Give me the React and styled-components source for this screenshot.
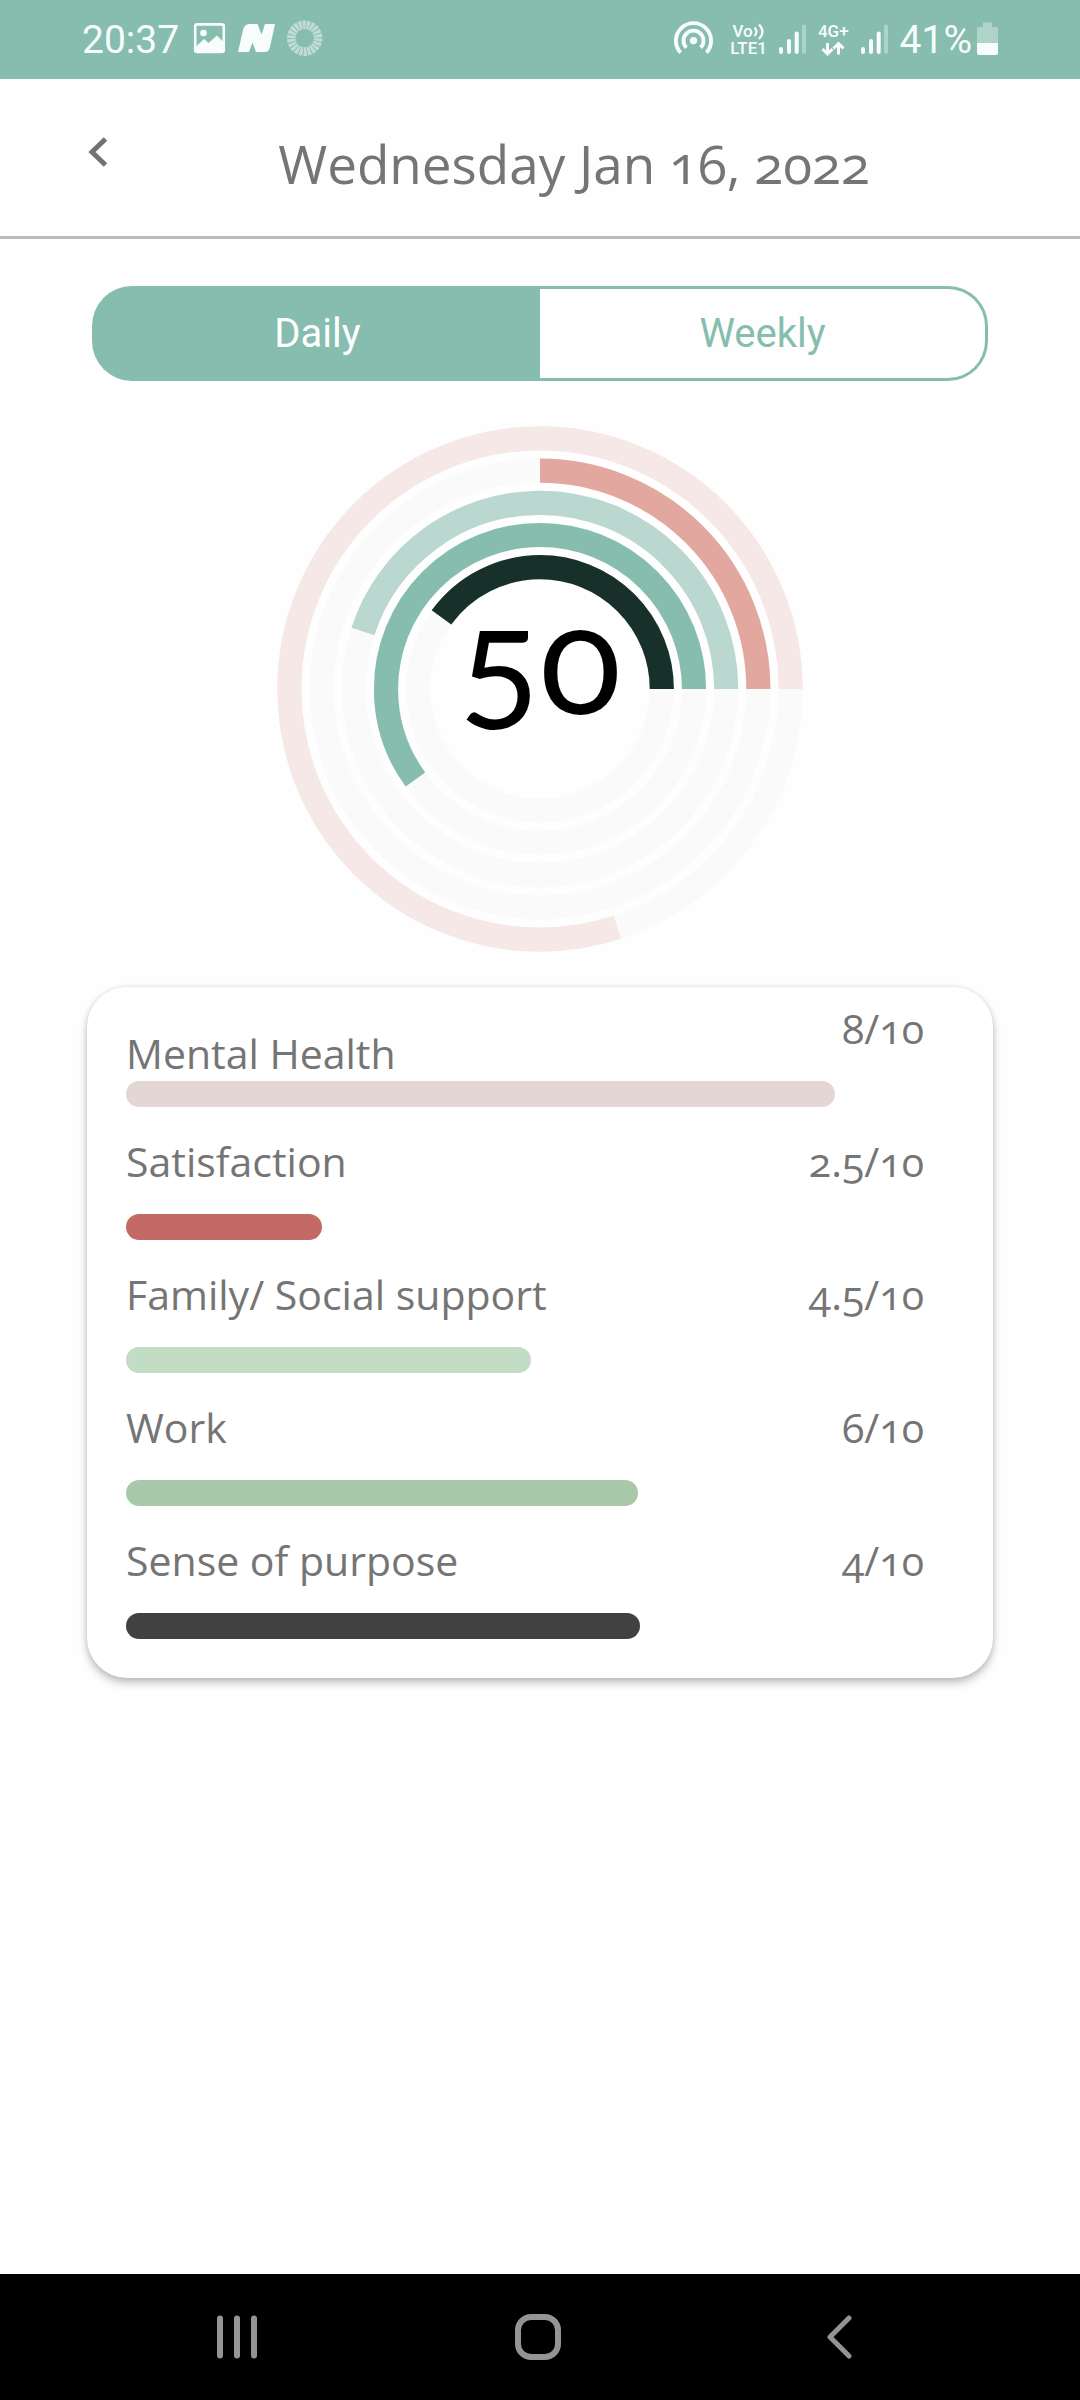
import React, { useState } from 'react';
import styled, { createGlobalStyle } from 'styled-components';

const color = {
  brand: '#86bdae',
  text: '#757575',
  page: '#fefefe',
  rule: '#bcbbbb',
  navIcon: '#949494',
};

const GlobalStyle = createGlobalStyle`
  *, *::before, *::after { box-sizing: border-box; }
  body {
    margin: 0;
    background: ${color.page};
    color: ${color.text};
    font-family: 'Open Sans', 'Noto Sans', sans-serif;
    font-variant-numeric: oldstyle-nums;
  }
  button {
    border: 0;
    padding: 0;
    background: none;
    font: inherit;
    color: inherit;
    cursor: pointer;
  }
  svg { display: block; flex: none; }
`;

const Screen = styled.div`
  min-height: 100vh;
  display: flex;
  flex-direction: column;
`;

/* Status bar */

const StatusBar = styled.div`
  display: flex;
  align-items: center;
  justify-content: space-between;
  height: 79px;
  padding: 0 82px;
  background: ${color.brand};
  color: #f8fcfb;
  font-family: Roboto, sans-serif;
  font-variant-numeric: normal;
`;

const StatusGroup = styled.div`
  display: flex;
  align-items: center;
  gap: ${(p) => p.$gap}px;
`;

const StatusText = styled.span`
  font-size: 39px;
  line-height: 48px;
`;

const Carrier = styled.div`
  display: flex;
  flex-direction: column;
  align-items: center;
  font-size: 17px;
  line-height: 17px;
  font-weight: 500;
`;

const CarrierLine = styled.span`
  display: flex;
  height: 17px;
`;

/* Header */

const Header = styled.header`
  display: flex;
  align-items: flex-start;
  padding: 48px 60px 35px 68px;
  border-bottom: 3px solid ${color.rule};
`;

const BackButton = styled.button`
  display: grid;
  place-items: center;
  width: 60px;
  height: 50px;
`;

const Title = styled.h1`
  flex: 1;
  margin: 0;
  text-align: center;
  font-size: 53px;
  line-height: 74px;
  font-weight: 400;
`;

/* Content */

const Content = styled.main`
  display: flex;
  flex-direction: column;
  padding: 47px 87px;
`;

const Toggle = styled.div`
  display: flex;
  height: 95px;
  margin: 0 5px;
`;

const ToggleButton = styled.button`
  flex: 1;
  border: 3px solid ${color.brand};
  font-family: Roboto, sans-serif;
  font-size: 40px;
  background: ${(p) => (p.$active ? color.brand : color.page)};
  color: ${(p) => (p.$active ? '#fff' : color.brand)};

  &:first-child {
    border-right: 0;
    border-radius: 40px 0 0 40px;
  }
  &:last-child {
    border-left: 0;
    border-radius: 0 40px 40px 0;
  }
`;

const Chart = styled.figure`
  display: grid;
  place-items: center;
  margin: 45px 0 35px;

  & > * { grid-area: 1 / 1; }
`;

const ChartSvg = styled.svg`
  width: 526px;
  max-width: 100%;
  height: auto;
`;

const ChartValue = styled.figcaption`
  padding-bottom: 66px;
  color: #000;
  font-family: Lato, sans-serif;
  font-size: 150px;
  line-height: 160px;
`;

const Card = styled.section`
  display: flex;
  flex-direction: column;
  gap: 26px;
  padding: 13px 69px 39px 39px;
  border-radius: 40px;
  background: #fff;
  box-shadow: 0 5px 9px rgba(0, 0, 0, 0.24), 0 0 5px rgba(0, 0, 0, 0.1);
`;

const ScoreHead = styled.div`
  display: flex;
  justify-content: space-between;
  height: 81px;
  font-size: 41px;
  line-height: 56px;
`;

const ScoreLabel = styled.span`
  align-self: ${(p) => (p.$low ? 'flex-end' : 'flex-start')};
`;

const ScoreBar = styled.div`
  height: 26px;
  border-radius: 13px;
  background: ${(p) => p.$color};
`;

/* Navigation bar */

const NavBar = styled.nav`
  display: flex;
  justify-content: center;
  height: 126px;
  margin-top: auto;
  padding-right: 4px;
  background: #000;
  color: ${color.navIcon};
`;

const NavButton = styled.button`
  display: grid;
  place-items: center;
  width: 28%;
`;

const scores = [
  { label: 'Mental Health', score: 8, width: 709, ring: '#f6e8e6', bar: '#e5d6d6', low: true },
  { label: 'Satisfaction', score: 2.5, width: 196, ring: '#e2a79f', bar: '#c36a64' },
  { label: 'Family/ Social support', score: 4.5, width: 405, ring: '#bbd8d0', bar: '#c3dcc4' },
  { label: 'Work', score: 6, width: 512, ring: '#86bdae', bar: '#a8c9a9' },
  { label: 'Sense of purpose', score: 4, width: 514, ring: '#17302a', bar: '#414141' },
];
const FULL_WIDTH = 798;

function ScoreRings() {
  return (
    <ChartSvg viewBox="0 0 526 526" aria-hidden="true">
      <g transform="translate(263 263) scale(1 -1)" fill="none" strokeWidth="24.2">
        {scores.map((s, i) => {
          const r = 250.6 - i * 32.2;
          return (
            <g key={s.label}>
              <circle r={r} stroke="#fafafa" />
              <circle r={r} stroke={s.ring} pathLength="10" strokeDasharray={`${s.score} 10`} />
            </g>
          );
        })}
      </g>
    </ChartSvg>
  );
}

function Signal() {
  return (
    <svg width="27" height="39" fill="currentColor">
      <rect x="0" y="27" width="4" height="7" rx="2" />
      <rect x="8" y="19" width="4" height="15" rx="2" />
      <rect x="15.7" y="11.5" width="4" height="22.5" rx="2" />
      <rect x="23" y="4.5" width="4" height="29.5" rx="2" opacity=".35" />
    </svg>
  );
}

function SystemStatus() {
  return (
    <StatusBar>
      <StatusGroup $gap={12}>
        <StatusText>20:37</StatusText>
        <svg width="35" height="39">
          <rect x="4.2" y="4.4" width="28.6" height="27.6" rx="2" fill="none" stroke="currentColor" strokeWidth="2.6" />
          <circle cx="12.5" cy="13" r="3.3" fill="currentColor" />
          <path d="M4 27.5 13 19l4.5 4L26 15.5l7 7V32H4Z" fill="currentColor" />
        </svg>
        <svg width="37" height="39" fill="currentColor">
          <path d="M0 32 5 10Q6.5 4 11 4H19.5L23.5 14.5 27 4H37L32 27Q31 32 27 32H18L14.5 22.5 11 32Z" />
        </svg>
        <svg width="36" height="39" fill="none" stroke="currentColor">
          <circle cx="17.7" cy="18.2" r="13.4" strokeWidth="8.6" opacity=".5" pathLength="22" strokeDasharray=".78 .22" />
        </svg>
      </StatusGroup>
      <StatusGroup $gap={5}>
        <StatusGroup $gap={12}>
          <svg width="44" height="39" fill="none" stroke="currentColor" strokeWidth="3.9">
            <circle cx="19.5" cy="20.6" r="3.7" fill="currentColor" stroke="none" />
            <path d="M12.4 27.7A10 10 0 1 1 26.6 27.7M6.5 32.6A17.6 17.6 0 1 1 32.5 32.6" />
          </svg>
          <Carrier>
            <CarrierLine>
              Vo
              <svg width="12" height="17" fill="none" stroke="currentColor" strokeWidth="2.2">
                <path d="M1.5 4.5Q5.500 8.500 1.500 13M6 1.500Q13 8.500 6 16" />
              </svg>
            </CarrierLine>
            <CarrierLine>LTE1</CarrierLine>
          </Carrier>
          <Signal />
          <Carrier>
            <CarrierLine>4G+</CarrierLine>
            <svg width="24" height="17" fill="none" stroke="currentColor" strokeWidth="3">
              <path d="M6.5 3V14M1.5 9l5 5 5-5M17.5 14.5V4M12.5 8.5l5-5 5 5" />
            </svg>
          </Carrier>
          <Signal />
          <StatusText>41%</StatusText>
        </StatusGroup>
        <svg width="21" height="39" fill="currentColor">
          <path d="M6 2.5h9V7h4.5Q21 7 21 8.5V23H0V8.5Q0 7 1.5 7H6Z" opacity=".35" />
          <path d="M0 23h21v10q0 2-2 2H2q-2 0-2-2Z" />
        </svg>
      </StatusGroup>
    </StatusBar>
  );
}

export default function App() {
  const [period, setPeriod] = useState('Daily');

  return (
    <Screen>
      <GlobalStyle />
      <SystemStatus />
      <Header>
        <BackButton aria-label="Back">
          <svg width="20" height="30" fill="none" stroke="#757170" strokeWidth="5">
            <path d="M17.5 2 4 15 17.5 28" />
          </svg>
        </BackButton>
        <Title>Wednesday Jan 16, 2022</Title>
      </Header>

      <Content>
        <Toggle>
          {['Daily', 'Weekly'].map((name) => (
            <ToggleButton
              key={name}
              $active={period === name}
              aria-pressed={period === name}
              onClick={() => setPeriod(name)}
            >
              {name}
            </ToggleButton>
          ))}
        </Toggle>

        <Chart>
          <ScoreRings />
          <ChartValue>50</ChartValue>
        </Chart>

        <Card>
          {scores.map((s) => (
            <div key={s.label}>
              <ScoreHead>
                <ScoreLabel $low={s.low}>{s.label}</ScoreLabel>
                <span>{s.score}/10</span>
              </ScoreHead>
              <ScoreBar $color={s.bar} style={{ width: `${(s.width / FULL_WIDTH) * 100}%` }} />
            </div>
          ))}
        </Card>
      </Content>

      <NavBar>
        <NavButton aria-label="Recent apps">
          <svg width="42" height="44" fill="none" stroke="currentColor" strokeWidth="6" strokeLinecap="round">
            <path d="M4 3.5v37M21 3.5v37M38 3.5v37" />
          </svg>
        </NavButton>
        <NavButton aria-label="Home">
          <svg width="46" height="46" fill="none" stroke="currentColor" strokeWidth="6">
            <rect x="3" y="3" width="40" height="40" rx="13" />
          </svg>
        </NavButton>
        <NavButton aria-label="Go back">
          <svg width="26" height="44" fill="none" stroke="currentColor" strokeWidth="5" strokeLinecap="round" strokeLinejoin="round">
            <path d="M23 3 4 22 23 41" />
          </svg>
        </NavButton>
      </NavBar>
    </Screen>
  );
}
